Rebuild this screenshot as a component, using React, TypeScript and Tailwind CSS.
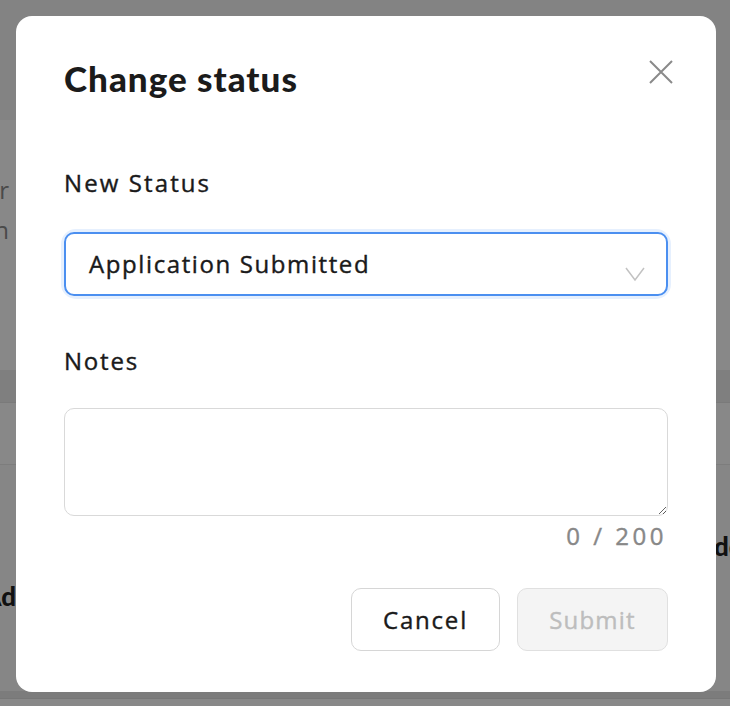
import { useState } from "react";

const BODY = { fontFamily: "'Open Sans', 'Noto Sans', sans-serif" };
const HEAD = { fontFamily: "Lato, 'Noto Sans', sans-serif" };

export default function App() {
  const [notes, setNotes] = useState("");

  return (
    <div className="relative h-[706px] w-[730px] overflow-hidden bg-[#888888]" style={BODY}>
      {/* page behind the overlay */}
      <div className="flex flex-col">
        <div className="h-[120px] bg-[#838383]" />
        <div className="flex h-[250px] flex-col pt-[50px] text-[24px] leading-[40px] text-[#4a4a4a]">
          <div className="flex w-[9px] justify-end whitespace-nowrap">Senior</div>
          <div className="flex w-[9px] justify-end whitespace-nowrap">Design</div>
        </div>
        <div className="h-[33px] border-b border-[#7a7a7a] bg-[#7f7f7f]" />
        <div className="h-[62px] border-b border-[#7d7d7d]" />
        <div className="flex h-[226px] bg-[#868686]" style={HEAD}>
          <div className="flex w-full items-start justify-between pt-[66px] text-[26px] font-black leading-[30px] text-[#111]">
            <div className="mt-[50px] flex w-[16px] justify-end whitespace-nowrap">Ad</div>
            <div className="w-[16px] overflow-hidden whitespace-nowrap">dd</div>
          </div>
        </div>
        <div className="h-[8px] border-b border-[#777] bg-[#7c7c7c]" />
        <div className="flex-1 bg-[#7e7e7e]" />
      </div>

      {/* modal */}
      <div className="absolute inset-0 flex items-start justify-start pl-[16px] pt-[16px]">
        <div className="flex h-[676px] w-[700px] flex-col rounded-[16px] bg-white px-[48px] pt-[40px]">
          <div className="flex items-start justify-between">
            <h2 className="text-[35px] font-black leading-[44px] tracking-[1px] text-[#1b1b1b]" style={HEAD}>
              Change status
            </h2>
            <button className="-mr-[11px] mt-[-2px] flex h-[36px] w-[36px] items-center justify-center">
              <svg width="26" height="26" viewBox="0 0 26 26" fill="none" stroke="#8a8a8a" strokeWidth="2">
                <path d="M2 2L24 24M24 2L2 24" />
              </svg>
            </button>
          </div>

          <label className="mt-[67px] text-[24px] leading-[32px] tracking-[2.1px] text-[#1a1a1a] [-webkit-text-stroke:0.4px_#1a1a1a]">
            New Status
          </label>
          <div className="mt-[33px] rounded-[12px] ring-[3px] ring-[#e6f0fe]">
            <div className="flex h-[64px] items-center justify-between rounded-[10px] border-2 border-[#4b8ff0] pl-[23px] pr-[20px]">
              <span className="text-[24px] leading-[32px] tracking-[1.6px] text-[#1a1a1a] [-webkit-text-stroke:0.4px_#1a1a1a]">
                Application Submitted
              </span>
              <svg className="mt-[20px]" width="22" height="16" viewBox="0 0 22 16" fill="none" stroke="#c2c2c2" strokeWidth="1.5">
                <path d="M2 2L11 14L20 2" />
              </svg>
            </div>
          </div>

          <label className="mt-[49px] text-[24px] leading-[32px] tracking-[1.8px] text-[#1a1a1a] [-webkit-text-stroke:0.4px_#1a1a1a]">
            Notes
          </label>
          <textarea
            value={notes}
            maxLength={200}
            onChange={(e) => setNotes(e.target.value)}
            className="mt-[31px] h-[108px] w-full rounded-[10px] border-[1.5px] border-[#d9d9d9] px-[16px] py-[12px] text-[20px] outline-none"
          />
          <div className="mr-[1px] mt-[5px] text-right text-[24px] leading-[30px] tracking-[3.5px] text-[#888] [-webkit-text-stroke:0.4px_#888]">
            {notes.length} / 200
          </div>

          <div className="mt-[37px] flex justify-end gap-[17px]">
            <button className="h-[63px] w-[149px] rounded-[10px] border-[1.5px] border-[#d6d6d6] bg-white text-[24px] tracking-[1.8px] text-[#1a1a1a] [-webkit-text-stroke:0.4px_#1a1a1a]">
              Cancel
            </button>
            <button
              disabled
              className="h-[63px] w-[151px] rounded-[10px] border-[1.5px] border-[#e0e0e0] bg-[#f4f4f4] text-[24px] tracking-[1.2px] text-[#bdbdbd] [-webkit-text-stroke:0.4px_#bdbdbd]"
            >
              Submit
            </button>
          </div>
        </div>
      </div>
    </div>
  );
}
